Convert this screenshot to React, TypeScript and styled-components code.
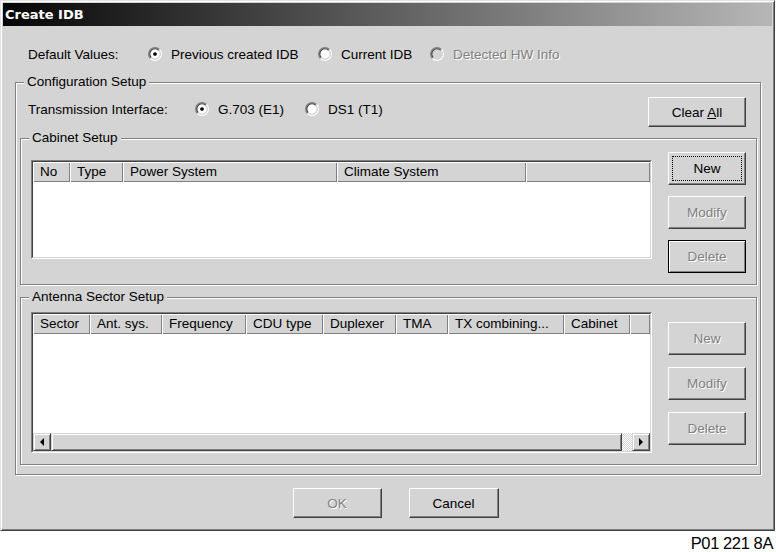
import React from "react";
import styled, { createGlobalStyle, css } from "styled-components";

const BG = "#d4d4d4";

const Global = createGlobalStyle`
  html, body { margin: 0; padding: 0; background: #fff; }
  body {
    font-family: "Liberation Sans", Arial, sans-serif;
    font-size: 13.5px;
    color: #000;
  }
  * { box-sizing: border-box; }
`;

const Page = styled.div`
  width: 776px;
  height: 552px;
  display: flex;
  flex-direction: column;
  overflow: hidden;
`;

const Window = styled.div`
  width: 775px;
  height: 531px;
  flex: none;
  background: ${BG};
  border: 1px solid;
  border-color: #e2e2e2 #404040 #404040 #e2e2e2;
  box-shadow: inset 1px 1px 0 #fff, inset -1px -1px 0 #808080;
  padding: 2px;
  display: flex;
  flex-direction: column;
`;

const TitleBar = styled.div`
  height: 23px;
  flex: none;
  background: linear-gradient(to right, #050505 0%, #5c5c5c 48%, #b6b6b6 100%);
  color: #fff;
  font-family: "DejaVu Sans", Verdana, sans-serif;
  font-weight: bold;
  font-size: 13px;
  line-height: 23px;
  padding-left: 2px;
  white-space: nowrap;
`;

const Body = styled.div`
  flex: 1;
  display: flex;
  flex-direction: column;
  padding: 18px 11px 0 12px;
`;

const Row = styled.div<{ $pl?: number; $pr?: number; $h: number }>`
  display: flex;
  align-items: center;
  height: ${(p) => p.$h}px;
  flex: none;
  padding-left: ${(p) => p.$pl ?? 0}px;
  padding-right: ${(p) => p.$pr ?? 0}px;
`;

const TopRow = styled.div`
  display: flex;
  align-items: flex-start;
  height: 30px;
  flex: none;
  padding: 0 11px 0 8px;
`;

const RadioLine = styled.div`
  display: flex;
  align-items: center;
  height: 24px;
  flex: 1;
`;

const FieldLabel = styled.span<{ $w: number }>`
  width: ${(p) => p.$w}px;
  flex: none;
  white-space: nowrap;
`;

const Option = styled.label<{ $w?: number }>`
  display: flex;
  align-items: center;
  gap: 9px;
  white-space: nowrap;
  ${(p) => (p.$w ? `width: ${p.$w}px; flex: none;` : "")}
`;

const OptionText = styled.span<{ $disabled?: boolean }>`
  ${(p) =>
    p.$disabled &&
    css`
      color: #808080;
      text-shadow: 1px 1px 0 #fff;
    `}
`;

const RadioSvg = styled.svg`
  display: block;
  flex: none;
`;

const Group = styled.div<{ $mt: number }>`
  position: relative;
  flex: none;
  margin-top: ${(p) => p.$mt}px;
  border: 1px solid #808080;
  box-shadow: 1px 1px 0 #fff, inset 1px 1px 0 #fff;
`;

const ConfigGroup = styled(Group)`
  display: flex;
  flex-direction: column;
  padding: 14px 3px 9px 4px;
`;

const SubGroup = styled(Group)<{ $pb: number }>`
  display: flex;
  align-items: flex-start;
  padding: 0 10px ${(p) => p.$pb}px 10px;
`;

const Legend = styled.span`
  position: absolute;
  top: -9px;
  left: 8px;
  padding: 0 3px;
  line-height: 16px;
  background: ${BG};
  white-space: nowrap;
`;

const ListOuter = styled.div<{ $mt: number; $h: number }>`
  width: 621px;
  height: ${(p) => p.$h}px;
  margin-top: ${(p) => p.$mt}px;
  flex: none;
  border: 1px solid;
  border-color: #808080 #fff #fff #808080;
  display: flex;
`;

const ListInner = styled.div`
  flex: 1;
  border: 1px solid;
  border-color: #404040 ${BG} ${BG} #404040;
  background: #fff;
  display: flex;
  flex-direction: column;
  overflow: hidden;
`;

const Header = styled.div`
  display: flex;
  height: 20px;
  flex: none;
  background: ${BG};
`;

const HCell = styled.div<{ $w?: number }>`
  ${(p) => (p.$w ? `width: ${p.$w}px; flex: none;` : "flex: 1;")}
  box-shadow: inset 1px 1px 0 #fff, inset -1px -1px 0 #808080;
  padding-left: 7px;
  line-height: 20px;
  white-space: nowrap;
  overflow: hidden;
`;

const ListBody = styled.div`
  flex: 1;
  background: #fff;
`;

const ScrollBar = styled.div`
  display: flex;
  height: 18px;
  flex: none;
  background: ${BG};
`;

const raised = css`
  border: 1px solid;
  border-color: ${BG} #404040 #404040 ${BG};
  box-shadow: inset 1px 1px 0 #fff, inset -1px -1px 0 #808080;
  background: ${BG};
`;

const ScrollArrow = styled.div`
  ${raised};
  width: 18px;
  flex: none;
  display: flex;
  align-items: center;
  justify-content: center;
`;

const Thumb = styled.div<{ $w: number }>`
  ${raised};
  width: ${(p) => p.$w}px;
  flex: none;
`;

const Track = styled.div`
  flex: 1;
  background: repeating-conic-gradient(#fff 0 25%, ${BG} 0 50%) 0 0 / 2px 2px;
`;

const ButtonCol = styled.div<{ $mt: number; $gap: number }>`
  display: flex;
  flex-direction: column;
  gap: ${(p) => p.$gap}px;
  margin-top: ${(p) => p.$mt}px;
  margin-left: 16px;
  width: 78px;
  flex: none;
`;

const Btn = styled.button<{ $w: number; $h: number; $isDefault?: boolean; $focus?: boolean }>`
  position: relative;
  width: ${(p) => p.$w}px;
  height: ${(p) => p.$h}px;
  flex: none;
  padding: 0;
  margin: 0;
  font: inherit;
  color: #000;
  background: ${BG};
  border: 1px solid;
  border-color: #fff #404040 #404040 #fff;
  box-shadow: inset -1px -1px 0 #808080;
  cursor: default;
  ${(p) =>
    p.$isDefault &&
    css`
      border-color: #000;
      box-shadow: inset 1px 1px 0 #fff, inset -1px -1px 0 #808080;
    `}
  ${(p) =>
    p.$focus &&
    css`
      &::after {
        content: "";
        position: absolute;
        inset: 3px;
        border: 1px dotted #000;
      }
    `}
  &:disabled {
    color: #808080;
    text-shadow: 1px 1px 0 #fff;
  }
`;

const Footer = styled.div`
  display: flex;
  justify-content: center;
  gap: 27px;
  margin-top: 13px;
  padding-left: 15px;
  flex: none;
`;

const Caption = styled.div`
  text-align: right;
  padding-right: 3px;
  margin-top: 3px;
  font-size: 16.5px;
  line-height: 18px;
  letter-spacing: -0.4px;
  white-space: nowrap;
`;

function Radio({ checked, disabled }: { checked?: boolean; disabled?: boolean }) {
  return (
    <RadioSvg width="14" height="14" viewBox="0 0 12 12">
      <circle cx="6" cy="6" r="4.2" fill={disabled ? BG : "#fff"} />
      <path d="M2.111 9.889 A5.5 5.5 0 0 1 9.889 2.111" fill="none" stroke="#808080" strokeWidth="1" />
      <path d="M9.889 2.111 A5.5 5.5 0 0 1 2.111 9.889" fill="none" stroke="#fff" strokeWidth="1" />
      <path d="M2.818 9.182 A4.5 4.5 0 0 1 9.182 2.818" fill="none" stroke="#404040" strokeWidth="1" />
      <path d="M9.182 2.818 A4.5 4.5 0 0 1 2.818 9.182" fill="none" stroke={BG} strokeWidth="1" />
      {checked && <circle cx="6" cy="6" r="1.6" fill="#000" />}
    </RadioSvg>
  );
}

function Arrow({ dir }: { dir: "left" | "right" }) {
  return (
    <svg width="6" height="8" viewBox="0 0 6 8" style={{ display: "block" }}>
      {dir === "left" ? (
        <polygon points="5,0 5,8 1,4" fill="#000" />
      ) : (
        <polygon points="1,0 1,8 5,4" fill="#000" />
      )}
    </svg>
  );
}

const cabinetCols: { label: string; w?: number }[] = [
  { label: "No", w: 37 },
  { label: "Type", w: 53 },
  { label: "Power System", w: 214 },
  { label: "Climate System", w: 189 },
  { label: "" },
];

const antennaCols: { label: string; w?: number }[] = [
  { label: "Sector", w: 57 },
  { label: "Ant. sys.", w: 72 },
  { label: "Frequency", w: 84 },
  { label: "CDU type", w: 77 },
  { label: "Duplexer", w: 73 },
  { label: "TMA", w: 52 },
  { label: "TX combining...", w: 116 },
  { label: "Cabinet", w: 66 },
  { label: "" },
];

export default function App() {
  return (
    <Page>
      <Global />
      <Window>
        <TitleBar>Create IDB</TitleBar>
        <Body>
          <Row $h={20} $pl={13}>
            <FieldLabel $w={120}>Default Values:</FieldLabel>
            <Option $w={170}>
              <Radio checked />
              <OptionText>Previous created IDB</OptionText>
            </Option>
            <Option $w={112}>
              <Radio />
              <OptionText>Current IDB</OptionText>
            </Option>
            <Option>
              <Radio disabled />
              <OptionText $disabled>Detected HW Info</OptionText>
            </Option>
          </Row>

          <ConfigGroup $mt={18}>
            <Legend>Configuration Setup</Legend>
            <TopRow>
              <RadioLine>
                <FieldLabel $w={167}>Transmission Interface:</FieldLabel>
                <Option $w={110}>
                  <Radio checked />
                  <OptionText>G.703 (E1)</OptionText>
                </Option>
                <Option>
                  <Radio />
                  <OptionText>DS1 (T1)</OptionText>
                </Option>
              </RadioLine>
              <Btn $w={98} $h={30}>
                Clear <u>A</u>ll
              </Btn>
            </TopRow>

            <SubGroup $mt={11} $pb={11}>
              <Legend>Cabinet Setup</Legend>
              <ListOuter $mt={21} $h={99}>
                <ListInner>
                  <Header>
                    {cabinetCols.map((c, i) => (
                      <HCell key={i} $w={c.w}>
                        {c.label}
                      </HCell>
                    ))}
                  </Header>
                  <ListBody />
                </ListInner>
              </ListOuter>
              <ButtonCol $mt={13} $gap={11}>
                <Btn $w={78} $h={33} $focus>
                  New
                </Btn>
                <Btn $w={78} $h={33} disabled>
                  Modify
                </Btn>
                <Btn $w={78} $h={33} disabled $isDefault>
                  Delete
                </Btn>
              </ButtonCol>
            </SubGroup>

            <SubGroup $mt={12} $pb={11}>
              <Legend>Antenna Sector Setup</Legend>
              <ListOuter $mt={14} $h={141}>
                <ListInner>
                  <Header>
                    {antennaCols.map((c, i) => (
                      <HCell key={i} $w={c.w}>
                        {c.label}
                      </HCell>
                    ))}
                  </Header>
                  <ListBody />
                  <ScrollBar>
                    <ScrollArrow>
                      <Arrow dir="left" />
                    </ScrollArrow>
                    <Thumb $w={571} />
                    <Track />
                    <ScrollArrow>
                      <Arrow dir="right" />
                    </ScrollArrow>
                  </ScrollBar>
                </ListInner>
              </ListOuter>
              <ButtonCol $mt={24} $gap={12}>
                <Btn $w={78} $h={33} disabled>
                  New
                </Btn>
                <Btn $w={78} $h={33} disabled>
                  Modify
                </Btn>
                <Btn $w={78} $h={33} disabled>
                  Delete
                </Btn>
              </ButtonCol>
            </SubGroup>
          </ConfigGroup>

          <Footer>
            <Btn $w={89} $h={30} disabled>
              OK
            </Btn>
            <Btn $w={90} $h={30}>
              Cancel
            </Btn>
          </Footer>
        </Body>
      </Window>
      <Caption>P01 221 8A</Caption>
    </Page>
  );
}
